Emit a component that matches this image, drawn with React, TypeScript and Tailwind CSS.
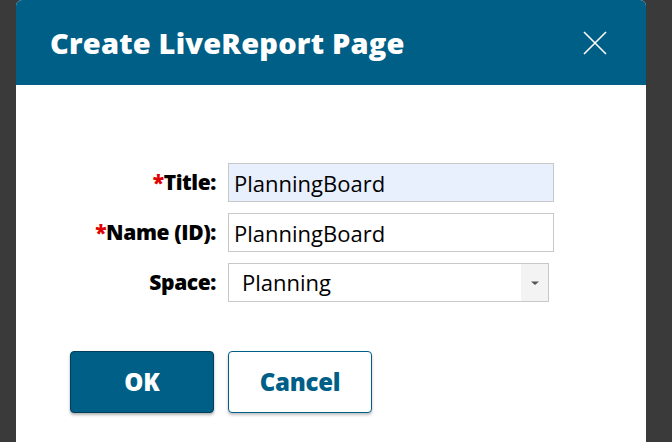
const font = { fontFamily: '"Open Sans", "Noto Sans", sans-serif' };

function Label({ text, required }: { text: string; required?: boolean }) {
  return (
    <label className="w-[212px] pr-3 text-right text-[21px] font-extrabold text-black leading-none tracking-[-0.4px]">
      {required && <span className="text-[#e00000]">*</span>}
      {text}
    </label>
  );
}

export default function App() {
  return (
    <div className="w-[672px] h-[442px] bg-[#3a3a3a] overflow-hidden" style={font}>
      <div className="ml-4 w-[630px] h-[460px] bg-white rounded-t-md overflow-hidden">
        <div className="h-[85px] bg-[#005f87] flex items-center justify-between pl-[34px] pr-[38px]">
          <h1 className="text-white text-[29px] font-extrabold tracking-[0.2px]">Create LiveReport Page</h1>
          <button className="text-white">
            <svg width="26" height="26" viewBox="0 0 26 26" fill="none" stroke="white" strokeWidth="1.6">
              <path d="M2 2L24 24M24 2L2 24" />
            </svg>
          </button>
        </div>

        <div className="pt-[78px] flex flex-col gap-[11px]">
          <div className="flex items-center">
            <Label text="Title:" required />
            <input
              readOnly
              value="PlanningBoard"
              className="w-[326px] h-[39px] border border-[#c8c8c8] bg-[#e8f0fe] px-[5px] text-[22px] text-black outline-none"
            />
          </div>
          <div className="flex items-center">
            <Label text="Name (ID):" required />
            <input
              readOnly
              value="PlanningBoard"
              className="w-[326px] h-[39px] border border-[#c8c8c8] bg-white px-[5px] text-[22px] text-black outline-none"
            />
          </div>
          <div className="flex items-center">
            <Label text="Space:" />
            <div className="w-[321px] h-[39px] border border-[#c8c8c8] bg-white flex items-center justify-between">
              <span className="pl-[13px] text-[22px] text-black">Planning</span>
              <span className="w-[27px] h-full bg-[#f3f3f3] flex items-center justify-center">
                <svg width="10" height="6" viewBox="0 0 10 6">
                  <path d="M1 1.5h8L5 5z" fill="#555" />
                </svg>
              </span>
            </div>
          </div>
        </div>

        <div className="mt-[49px] pl-[54px] flex gap-[14px]">
          <button className="w-[144px] h-[62px] rounded-[4px] bg-[#005f87] border border-[#003e5a] text-white text-[24px] font-extrabold shadow-[0_2px_3px_rgba(0,0,0,0.3)]">
            OK
          </button>
          <button className="w-[144px] h-[62px] rounded-[4px] bg-white border border-[#005f87] text-[#005f87] text-[24px] font-extrabold tracking-[-0.3px] shadow-[0_2px_3px_rgba(0,0,0,0.25)]">
            Cancel
          </button>
        </div>
      </div>
    </div>
  );
}
